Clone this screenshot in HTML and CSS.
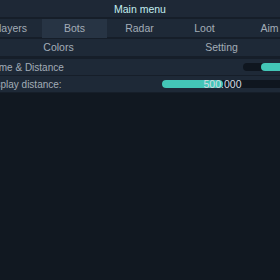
FILE: index.html
```html
<!DOCTYPE html>
<html>
<head>
<meta charset="utf-8">
<link rel="stylesheet" href="styles.css">
</head>
<body>
<div class="window">
  <div class="title">Main menu</div>
  <div class="tabs tabs-5">
    <div class="tab">Players</div>
    <div class="tab active">Bots</div>
    <div class="tab">Radar</div>
    <div class="tab">Loot</div>
    <div class="tab">Aim</div>
  </div>
  <div class="tabs tabs-2">
    <div class="tab">Colors</div>
    <div class="tab">Setting</div>
  </div>
  <div class="content">
    <div class="row">
      <span class="label">Name &amp; Distance</span>
      <div class="toggle"><div class="knob"></div></div>
    </div>
    <div class="row">
      <span class="label">Display distance:</span>
      <div class="slider"><div class="fill" style="width:50%"></div><span class="value">500.000</span></div>
    </div>
  </div>
</div>
</body>
</html>
```
FILE: styles.css
```css
html, body {
  margin: 0;
  padding: 0;
  background: #111821;
  overflow: hidden;
  width: 280px;
  height: 280px;
}
.window {
  margin-left: -23px;
  width: 326px;
  font-family: "Liberation Sans", Arial, sans-serif;
  font-size: 10.5px;
  color: #a3adb8;
  background: #161e29;
}
.title {
  height: 17px;
  line-height: 18px;
  text-align: center;
  background: #1e2836;
  color: #c2eef0;
  margin-bottom: 2px;
}
.tabs {
  display: grid;
  height: 18px;
  background: #1e2937;
  margin-bottom: 2px;
}
.tabs-5 { grid-template-columns: repeat(5, 65px); }
.tabs-2 { grid-template-columns: repeat(2, 163px); height: 17px; margin-bottom: 3px; }
.tab {
  text-align: center;
  line-height: 19px;
}
.tabs-2 .tab { line-height: 16px; }
.tab.active { background: #273444; }
.content {
  display: flex;
  flex-direction: column;
  gap: 1px;
  padding-bottom: 1px;
}
.row {
  height: 16px;
  background: #1e2937;
  display: flex;
  align-items: center;
  padding-left: 9px;
  font-size: 10px;
}
.label { flex: 1; }
.toggle {
  width: 42px;
  height: 8px;
  border-radius: 4px;
  background: #0f161f;
  margin-right: 18px;
  display: flex;
  justify-content: flex-end;
}
.knob {
  width: 24px;
  height: 8px;
  border-radius: 4px;
  background: #43c6b7;
}
.slider {
  width: 121px;
  height: 8px;
  border-radius: 4px;
  background: #0f161f;
  margin-right: 20px;
  position: relative;
  display: flex;
}
.fill {
  height: 8px;
  border-radius: 4px;
  background: #43c6b7;
}
.value {
  position: absolute;
  left: 0;
  right: 0;
  top: -3px;
  text-align: center;
  line-height: 14px;
  color: #d3dbe2;
  font-size: 10.5px;
}
```
